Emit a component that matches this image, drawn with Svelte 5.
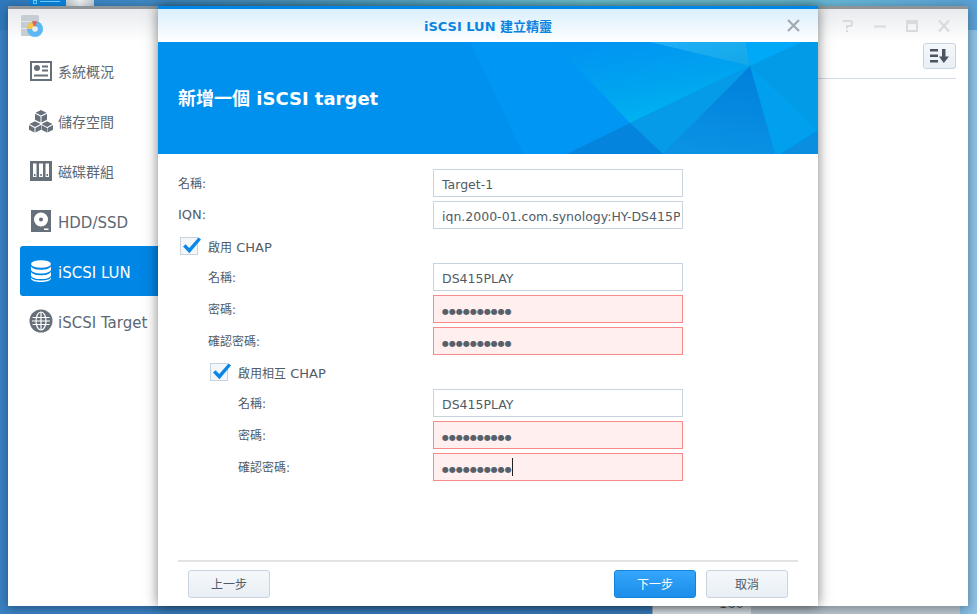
<script lang="ts">
  const nav = [
    { id: "overview", label: "系統概況", cjk: true },
    { id: "storage", label: "儲存空間", cjk: true },
    { id: "group", label: "磁碟群組", cjk: true },
    { id: "disk", label: "HDD/SSD" },
    { id: "lun", label: "iSCSI LUN", active: true },
    { id: "target", label: "iSCSI Target" }
  ];

  const dots = "●●●●●●●●●●";

  const chap = [
    { label: "名稱:", value: "DS415PLAY" },
    { label: "密碼:", value: dots, secret: true },
    { label: "確認密碼:", value: dots, secret: true }
  ];
  const mutual = [
    { label: "名稱:", value: "DS415PLAY" },
    { label: "密碼:", value: dots, secret: true },
    { label: "確認密碼:", value: dots, secret: true, caret: true }
  ];
</script>

{#snippet check(cjk, latin)}
  <label class="check">
    <span class="box">
      <svg width="22" height="20" viewBox="0 0 22 20"><path d="M3 10.5l2.6-2.3 3.6 3.7L18.6 1.6l2.4 1.9L9.4 17.2z" fill="#0a86e8" /></svg>
    </span>
    <span><span class="cjk">{cjk}</span> {latin}</span>
  </label>
{/snippet}

{#snippet field(row)}
  <div class="row">
    <span class="label" class:latin={row.latin}>{row.label}</span>
    <div class="control">
      <input class:secret={row.secret} value={row.value} readonly />
      {#if row.caret}<i class="caret"></i>{/if}
    </div>
  </div>
{/snippet}

<div class="desktop">
  <div class="tray">
    <span class="tray-blue"><i></i><b></b></span>
    <span class="tray-grey"></span>
  </div>

  <div class="behind"><span>160</span></div>

  <main class="window">
    <aside class="sidebar">
      <div class="logo">
        <svg width="26" height="24" viewBox="0 0 26 24">
          <rect x="1" y="1" width="18" height="21" rx="1.5" fill="#c6ced4" />
          <path d="M1 7.500h18M1 14.500h18" stroke="#e2e6e9" />
          <circle cx="15" cy="15" r="8" fill="#5cb8f2" />
          <path d="M15 15L7 15a8 8 0 0 1 5-7.400z" fill="#f4c84e" />
          <path d="M12 7.600a8 8 0 0 1 5-.4L15 15z" fill="#e8625a" />
          <circle cx="15" cy="15" r="2.800" fill="#e8eef2" />
        </svg>
      </div>
      <nav>
        {#each nav as item}
          <div class="item" class:active={item.active} class:cjk-item={item.cjk}>
            <svg width="24" height="24" viewBox="0 0 24 24">
              {#if item.id === "overview"}
                <path fill-rule="evenodd" d="M1 2h22v20H1zM3 4v16h18V4z" />
                <circle cx="8" cy="9" r="3" />
                <path d="M13 6.500h6v2h-6zM13 10.500h6v2h-6zM5 15.500h14v2H5z" />
              {:else if item.id === "storage"}
                <path d="M12 1l5.500 2.800L12 6.600 6.500 3.800zM6 4.800l5.500 2.800v6L6 10.800zM18 4.800l-5.500 2.800v6l5.500-2.800zM6 12.300l5.500 2.800L6 17.900.5 15.100zM0 16.100l5.500 2.800v4.600L0 20.700zM12 16.100l-5.500 2.800v4.600L12 20.700zM18 12.300l5.500 2.800-5.500 2.800-5.500-2.800zM12.500 16.100l5.500 2.800v4.600l-5.500-2.800zM24 16.100l-5.500 2.800v4.600l5.500-2.800z" />
              {:else if item.id === "group"}
                <path fill-rule="evenodd" d="M1 2h22v20H1zM4 4.500V18h3.500V4.500zM10 4.500V18h4V4.500zM16.500 4.500V18H20V4.500z" />
                <path d="M5 15h1.500v2H5zM11.300 15h1.500v2h-1.500zM17.500 15H19v2h-1.500z" />
              {:else if item.id === "disk"}
                <path fill-rule="evenodd" d="M2 1h20v22H2zM12 3.500a7 7 0 1 0 0 14 7 7 0 0 0 0-14zM12 8.500a2 2 0 1 1 0 4 2 2 0 0 1 0-4zM15 19.500v1.500h4.500v-1.500z" />
              {:else if item.id === "lun"}
                <ellipse cx="12" cy="5" rx="10" ry="3.800" />
                <path d="M2 7.500c1.500 2.400 5.500 3.300 10 3.300s8.500-.9 10-3.300v3.300c-1 2.500-5 3.700-10 3.700S3 13.300 2 10.800zM2 13c1.500 2.400 5.500 3.300 10 3.300S20.500 15.400 22 13v3.400c-1 2.500-5 3.700-10 3.700S3 18.900 2 16.400zM2 18.500c1.500 2.200 5.500 3 10 3s8.500-.8 10-3v1.300c-1 2.200-5 3.200-10 3.200S3 22 2 19.800z" />
              {:else}
                <circle cx="12" cy="12" r="11.500" />
                <g fill="none" stroke="#fff" stroke-width="1.200">
                  <ellipse cx="12" cy="12" rx="5" ry="9" />
                  <path d="M12 3v18M3.500 8.500h17M3 12h18M3.500 15.500h17" />
                </g>
              {/if}
            </svg>
            <span>{item.label}</span>
          </div>
        {/each}
      </nav>
    </aside>

    <section class="content">
      <header class="window-bar">
        <svg width="108" height="14" viewBox="0 0 108 14" fill="none" stroke="#d8dbde" stroke-width="2">
          <path d="M1 2h8l1 1v3L9 7H5v2.500M5 11v2" />
          <path d="M32 7.500h12" />
          <path d="M65 2h10v10H65z" /><path d="M64.500 3.500h11" stroke-width="3" />
          <path d="M97 1.500l10 11M107 1.500l-10 11" stroke-width="2.200" />
        </svg>
      </header>
      <div class="toolbar">
        <button class="sort" aria-label="排序">
          <svg width="20" height="14" viewBox="0 0 20 14" fill="#4a5560">
            <path d="M0 0h8v2.500H0zM0 5.500h8V8H0zM0 11h8v2.500H0zM12 0h3.500v7.500H19L13.800 14 9 7.500h3z" />
          </svg>
        </button>
      </div>
    </section>
  </main>

  <div class="dialog">
    <header class="dialog-bar">
      <h1>iSCSI LUN 建立精靈</h1>
      <svg class="close" width="13" height="13" viewBox="0 0 13 13" fill="none" stroke="#a3a9af" stroke-width="2.200">
        <path d="M1 1l11 11M12 1L1 12" />
      </svg>
    </header>

    <div class="banner">
      <svg class="facets" width="660" height="112" viewBox="0 0 660 112">
        <defs>
          <linearGradient id="glow" x1="0.25" y1="0" x2="0.65" y2="1">
            <stop offset="0" stop-color="#0095f2" />
            <stop offset="0.55" stop-color="#00a4f0" />
            <stop offset="1" stop-color="#00b6f0" />
          </linearGradient>
          <linearGradient id="deep" x1="0.7" y1="0" x2="0.5" y2="1">
            <stop offset="0" stop-color="#0080dc" />
            <stop offset="1" stop-color="#0a92e4" />
          </linearGradient>
          <linearGradient id="pale" x1="0" y1="0" x2="1" y2="1">
            <stop offset="0" stop-color="#22aff8" />
            <stop offset="1" stop-color="#12a8e6" />
          </linearGradient>
        </defs>
        <path d="M312 0H395L472 81 409 112H365z" fill="#0096f4" />
        <path d="M395 0H492L592 24 472 81z" fill="url(#glow)" />
        <path d="M492 0H588L592 24z" fill="url(#pale)" />
        <path d="M588 0H645L592 24z" fill="#00a8f8" />
        <path d="M645 0H660V88L592 24z" fill="#029be8" />
        <path d="M592 24L660 88 622 112H617z" fill="#00a0ee" />
        <path d="M660 90V112H622z" fill="#0a8ee0" />
        <path d="M592 24L617 112H505z" fill="url(#deep)" />
        <path d="M592 24L505 112 472 81z" fill="#059be8" />
        <path d="M472 81L505 112H409z" fill="#0584de" />
      </svg>
      <h2>新增一個 iSCSI target</h2>
    </div>

    <form class="form">
      {@render field({ label: "名稱:", value: "Target-1" })}
      {@render field({ label: "IQN:", value: "iqn.2000-01.com.synology:HY-DS415PLAY.Target-1", latin: true })}

      <div class="group">
        {@render check("啟用", "CHAP")}
        {#each chap as row}
          {@render field(row)}
        {/each}

        <div class="group">
          {@render check("啟用相互", "CHAP")}
          {#each mutual as row}
            {@render field(row)}
          {/each}
        </div>
      </div>
    </form>

    <footer class="footer">
      <button type="button" class="btn">上一步</button>
      <span class="spacer"></span>
      <button type="button" class="btn primary">下一步</button>
      <button type="button" class="btn">取消</button>
    </footer>
  </div>
</div>

<style>
  :global(body) {
    margin: 0;
    overflow: hidden;
  }

  .desktop {
    position: relative;
    width: 977px;
    height: 614px;
    overflow: hidden;
    font-family: "DejaVu Sans", "Noto Sans CJK TC", sans-serif;
    font-size: 13px;
    color: #505b66;
    background:
      linear-gradient(90deg, #2f78bb 0, #3d86c4 12%, #4d9cc6 30%, #71cbdc 60%, #6cc0d8 80%, #5a9fd4 100%) top / 100% 30px no-repeat,
      linear-gradient(90deg, #3a80c2 0, #3b7fc0 90%, #8fc2e6 100%);
  }

  .tray {
    position: absolute;
    top: 0;
    left: 30px;
    display: flex;
  }
  .tray-blue {
    width: 36px;
    height: 6px;
    background: #0d83dd;
    display: flex;
    gap: 3px;
    padding-left: 3px;
    box-sizing: border-box;
  }
  .tray-blue i {
    width: 4px;
    height: 4px;
    border: 1px solid #6fd0ff;
    box-sizing: border-box;
  }
  .tray-blue b {
    width: 20px;
    height: 1px;
    margin-top: 1px;
    background: #6fd0ff;
  }
  .tray-grey {
    width: 28px;
    height: 6px;
    background: linear-gradient(90deg, #c4ccd2, #eef1f3 50%, #c4ccd2);
  }

  .behind {
    position: absolute;
    top: 590px;
    left: 652px;
    width: 308px;
    height: 30px;
    background: linear-gradient(90deg, #dfe6ec 0 32%, #b9c6d0 32%);
    border-left: 1px solid #a3b4c2;
    box-sizing: border-box;
  }
  .behind span {
    position: absolute;
    left: 66px;
    top: 6px;
    color: #57606a;
  }

  .window {
    position: absolute;
    left: 8px;
    top: 6px;
    width: 960px;
    height: 600px;
    display: flex;
    box-sizing: border-box;
    border-top: 3px solid #8d9599;
    background: #fff;
    box-shadow: 0 2px 10px rgba(0, 0, 0, 0.35);
  }

  .sidebar {
    width: 150px;
    flex: none;
    background: linear-gradient(#e8eaed, #fff 33px) no-repeat;
  }
  .logo {
    height: 37px;
    padding-left: 12px;
    padding-top: 5px;
    box-sizing: border-box;
  }
  nav {
    padding-left: 12px;
  }
  .item {
    height: 50px;
    display: flex;
    align-items: center;
    gap: 5px;
    padding-left: 9px;
    font-size: 15px;
    color: #5d6873;
    border-radius: 3px 0 0 3px;
  }
  .item span {
    padding-top: 4px;
  }
  .item.cjk-item {
    font-size: 14px;
  }
  .item.cjk-item span {
    padding-top: 0;
  }
  .item svg {
    fill: #66707a;
    flex: none;
  }
  .item.active {
    background: #0086e5;
    color: #fff;
  }
  .item.active svg {
    fill: #fff;
  }

  .content {
    flex: 1;
    background: linear-gradient(#e8eaed, #fff 33px) no-repeat;
    background-size: 100% 33px;
  }
  .window-bar {
    height: 33px;
    display: flex;
    justify-content: flex-end;
    align-items: center;
    padding-right: 18px;
    box-sizing: border-box;
  }
  .toolbar {
    margin: 0 12px 0 10px;
    height: 35px;
    display: flex;
    justify-content: flex-end;
    align-items: flex-start;
    border-bottom: 1px solid #d3dbe4;
    padding-top: 1px;
  }
  .sort {
    width: 33px;
    height: 26px;
    padding: 0;
    display: flex;
    align-items: center;
    justify-content: center;
    border: 1px solid #c8d3df;
    border-radius: 3px;
    background: linear-gradient(#f5f8fb, #e9eff5);
  }

  .dialog {
    position: absolute;
    left: 158px;
    top: 6px;
    width: 660px;
    height: 600px;
    display: flex;
    flex-direction: column;
    box-sizing: border-box;
    border-top: 3px solid #0086e5;
    background: #fff;
    box-shadow: 0 0 12px rgba(0, 0, 0, 0.5);
  }
  .dialog-bar {
    position: relative;
    height: 33px;
    flex: none;
    display: flex;
    align-items: center;
    justify-content: center;
    background: linear-gradient(#d9effc, #fff);
  }
  h1 {
    margin: 0;
    font-size: 13px;
    font-weight: bold;
    color: #0a84e0;
  }
  .close {
    position: absolute;
    right: 18px;
    top: 10px;
  }

  .banner {
    position: relative;
    height: 112px;
    flex: none;
    display: flex;
    align-items: center;
    padding: 0 0 2px 20px;
    box-sizing: border-box;
    background: #0090ee;
  }
  .facets {
    position: absolute;
    inset: 0;
  }
  h2 {
    position: relative;
    margin: 0;
    font-size: 18px;
    font-weight: bold;
    color: #fff;
  }

  .form {
    flex: 1;
    padding: 15px 135px 0 20px;
    display: flex;
    flex-direction: column;
    gap: 4px;
  }
  .group {
    display: flex;
    flex-direction: column;
    gap: 4px;
    padding-left: 30px;
  }
  .row {
    display: flex;
    justify-content: space-between;
    align-items: center;
    height: 28px;
  }
  .label {
    font-size: 12px;
    padding-bottom: 2px;
  }
  .label.latin {
    font-size: 13px;
  }
  .control {
    position: relative;
    flex: none;
  }
  input {
    display: block;
    width: 250px;
    height: 28px;
    padding: 2px 2px 0 8px;
    box-sizing: border-box;
    border: 1px solid #c8d3df;
    border-radius: 0;
    outline: 0;
    background: #fff;
    font: inherit;
    font-size: 12.5px;
    color: #505b66;
  }
  input.secret {
    padding-top: 4px;
    border-color: #f98a8a;
    background: #fff0ef;
    font-size: 8px;
    color: #57606a;
  }
  .caret {
    position: absolute;
    left: 79px;
    top: 5px;
    width: 1px;
    height: 18px;
    background: #222;
  }

  .check {
    display: flex;
    align-items: center;
    gap: 10px;
    height: 26px;
    margin-left: -28px;
  }
  .cjk {
    font-size: 12px;
  }
  .box {
    position: relative;
    width: 18px;
    height: 18px;
    flex: none;
    box-sizing: border-box;
    border: 1px solid #c8d3df;
    background: #f4f7fa;
  }
  .box svg {
    position: absolute;
    left: -1px;
    top: -2px;
  }

  .footer {
    flex: none;
    margin: 0 20px;
    height: 46px;
    padding: 8px 10px 0;
    display: flex;
    gap: 10px;
    box-sizing: border-box;
    border-top: 2px solid #e3e3e3;
  }
  .spacer {
    flex: 1;
  }
  .btn {
    width: 82px;
    height: 28px;
    padding: 0 0 2px;
    border: 1px solid #c8d3df;
    border-radius: 3px;
    background: linear-gradient(#f5f8fb, #e9eff5);
    font: inherit;
    font-size: 12px;
    color: #505b66;
  }
  .btn.primary {
    border-color: #1284dd;
    background: linear-gradient(#35a6fb, #1c8de9);
    color: #fff;
  }
</style>
